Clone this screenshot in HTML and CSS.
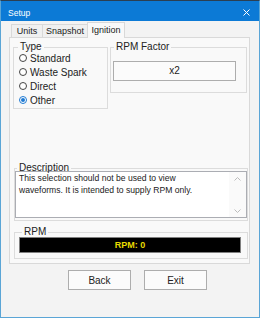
FILE: index.html
```html
<!DOCTYPE html>
<html lang="en">
<head>
    <meta charset="UTF-8">
    <meta name="viewport" content="width=device-width, initial-scale=1.0">
    <title>Setup</title>
    <link rel="stylesheet" href="styles.css">
</head>
<body>

    <div class="window">
        <div class="titlebar">
            <span class="title">Setup</span>
            <svg class="close" width="7" height="7" viewBox="0 0 7 7">
                <path d="M0.5 0.5 L6.5 6.5 M6.5 0.5 L0.5 6.5" stroke="#fff" stroke-width="1" fill="none"/>
            </svg>
        </div>

        <div class="content">
            <div class="tabs">
                <div class="tab tab-units">Units</div>
                <div class="tab tab-snapshot">Snapshot</div>
                <div class="tab tab-ignition active">Ignition</div>
            </div>

            <div class="panel">
                <div class="top-row">
                    <fieldset class="group type-group">
                        <legend class="legend-type">Type</legend>
                        <div class="radio-list">
                            <div class="radio"><span class="dot"></span>Standard</div>
                            <div class="radio"><span class="dot"></span>Waste Spark</div>
                            <div class="radio"><span class="dot"></span>Direct</div>
                            <div class="radio checked"><span class="dot"></span>Other</div>
                        </div>
                    </fieldset>

                    <fieldset class="group factor-group">
                        <legend class="legend-factor">RPM Factor</legend>
                        <div class="factor-btn">x2</div>
                    </fieldset>
                </div>

                <fieldset class="group desc-group">
                    <legend class="legend-desc">Description</legend>
                    <div class="desc-box">
                        <div class="desc-text">This selection should not be used to view waveforms. It is intended to supply RPM only.</div>
                        <div class="scrollbar">
                            <svg width="7" height="4" viewBox="0 0 7 4"><path d="M0.5 3.5 L3.5 0.5 L6.5 3.5" stroke="#bcbcbc" fill="none"/></svg>
                            <svg width="7" height="4" viewBox="0 0 7 4"><path d="M0.5 0.5 L3.5 3.5 L6.5 0.5" stroke="#bcbcbc" fill="none"/></svg>
                        </div>
                    </div>
                </fieldset>

                <fieldset class="group rpm-group">
                    <legend class="legend-rpm">RPM</legend>
                    <div class="rpm-bar">RPM: 0</div>
                </fieldset>
            </div>

            <div class="buttons">
                <button type="button" class="btn">Back</button>
                <button type="button" class="btn">Exit</button>
            </div>
        </div>
    </div>

</body>
</html>
```

FILE: styles.css
```css
body {
    margin: 0;
    font-family: "Liberation Sans", Arial, sans-serif;
    color: #222;
}

.window {
    width: 260px;
    height: 318px;
    box-sizing: border-box;
    border: 1px solid #5aa5d6;
    border-top-color: #2b3f52;
    background: #f3f3f3;
}

.titlebar {
    height: 20px;
    background: #0c7ad6;
    display: flex;
    align-items: center;
    justify-content: space-between;
    padding: 0 9px 0 7px;
    color: #fff;
    font-size: 8.5px;
}

.title {
    padding-top: 3px;
}

.close {
    display: block;
    margin-top: 2px;
}

.content {
    padding-left: 8px;
}

/* tabs */
.tabs {
    display: flex;
    align-items: flex-end;
    height: 16px;
    padding-left: 2px;
}

.tab {
    height: 12px;
    line-height: 12px;
    font-size: 9px;
    text-align: center;
    border: 1px solid #d9d9d9;
    border-bottom: none;
    background: #f0f0f0;
}

.tab-units {
    width: 30px;
}

.tab-snapshot {
    width: 44px;
    margin-left: -1px;
}

.tab-ignition {
    width: 36px;
    margin-left: -1px;
}

.tab.active {
    height: 15px;
    line-height: 14px;
    margin-bottom: -1px;
    background: #f9f9f9;
    position: relative;
    z-index: 1;
}

.panel {
    width: 241px;
    height: 227px;
    box-sizing: border-box;
    border: 1px solid #d9d9d9;
    background: #f9f9f9;
    padding: 4px 0 0 3px;
}

/* group boxes */
.group {
    margin: 0;
    padding: 0;
    min-width: 0;
    border: 1px solid #dcdcdc;
    box-sizing: border-box;
}

.group legend {
    font-size: 10px;
    line-height: 10px;
    padding: 0 2px;
}

.legend-type {
    margin-left: 4px;
}

.legend-factor {
    margin-left: 3px;
}

.legend-desc {
    margin-left: 2px;
}

.legend-rpm {
    margin-left: 3px;
}

.top-row {
    display: flex;
    align-items: flex-start;
    gap: 2px;
}

.type-group {
    width: 95px;
    padding-bottom: 1px;
}

.radio-list {
    margin-top: -1px;
    padding-left: 5px;
}

.radio {
    display: flex;
    align-items: center;
    height: 14px;
    font-size: 10px;
}

.dot {
    width: 8px;
    height: 8px;
    box-sizing: border-box;
    border: 1px solid #444;
    border-radius: 50%;
    background: #fff;
    margin-right: 3px;
    display: flex;
    align-items: center;
    justify-content: center;
}

.radio.checked .dot {
    border-color: #1f7ad3;
}

.radio.checked .dot::after {
    content: "";
    width: 4px;
    height: 4px;
    border-radius: 50%;
    background: #1f7ad3;
}

.factor-group {
    width: 137px;
    padding-bottom: 11px;
}

.factor-btn {
    width: 123px;
    height: 20px;
    box-sizing: border-box;
    margin: 9px 0 0 2px;
    border: 1px solid #adadad;
    background: #fbfbfb;
    font-size: 10px;
    line-height: 18px;
    text-align: center;
}

.desc-group {
    width: 234px;
    margin: 54px 0 0 1px;
    padding-bottom: 2px;
}

.desc-box {
    margin-top: -2px;
    height: 47px;
    box-sizing: border-box;
    border: 1px solid #abadb3;
    background: #fff;
    display: flex;
}

.desc-text {
    flex: 1;
    padding: 0 30px 0 3px;
    font-size: 8.6px;
    line-height: 12px;
}

.scrollbar {
    width: 17px;
    background: #fafafa;
    display: flex;
    flex-direction: column;
    justify-content: space-between;
    align-items: center;
    padding: 5px 0 4px;
}

.scrollbar svg {
    display: block;
}

.rpm-group {
    width: 234px;
    margin: 6px 0 0 1px;
    padding: 0 0 5px 4px;
}

.rpm-bar {
    width: 222px;
    height: 16px;
    box-sizing: border-box;
    border: 1px solid #808080;
    background: #000;
    color: #e8d800;
    font-size: 9px;
    font-weight: bold;
    line-height: 14px;
    text-align: center;
}

/* bottom buttons */
.buttons {
    display: flex;
    justify-content: center;
    gap: 13px;
    margin-top: 6px;
    padding-left: 7px;
}

.btn {
    width: 63px;
    height: 20px;
    border: 1px solid #adadad;
    background: #fbfbfb;
    font-family: "Liberation Sans", Arial, sans-serif;
    font-size: 10px;
    color: #222;
    padding: 0;
}
```
